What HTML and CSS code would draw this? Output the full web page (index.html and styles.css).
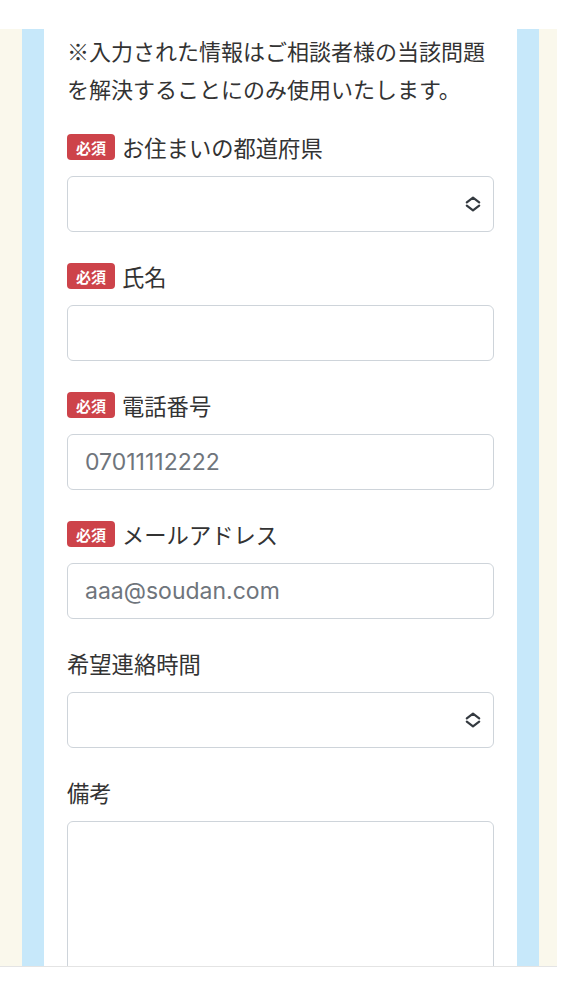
FILE: index.html
```html
<!DOCTYPE html>
<html lang="ja">
<head>
<meta charset="utf-8">
<title>フォーム</title>
<link rel="stylesheet" href="styles.css">
</head>
<body>
<div class="topbar"></div>
<div class="viewport">
  <div class="outer">
    <div class="inner">
      <div class="panel">
        <p class="note">※入力された情報はご相談者様の当該問題を解決することにのみ使用いたします。</p>

        <div class="group">
          <label class="label"><span class="badge">必須</span>お住まいの都道府県</label>
          <div class="select">
            <svg class="chev" viewBox="0 0 16 16" width="16" height="16"><path d="M1.8 6.3 L8 1.6 L14.2 6.3 M1.8 9.7 L8 14.4 L14.2 9.7" fill="none" stroke="#343a40" stroke-width="2.2" stroke-linecap="round" stroke-linejoin="round"/></svg>
          </div>
        </div>

        <div class="group">
          <label class="label"><span class="badge">必須</span>氏名</label>
          <div class="input"></div>
        </div>

        <div class="group">
          <label class="label"><span class="badge">必須</span>電話番号</label>
          <div class="input"><span class="ph">07011112222</span></div>
        </div>

        <div class="group">
          <label class="label"><span class="badge">必須</span>メールアドレス</label>
          <div class="input"><span class="ph">aaa@soudan.com</span></div>
        </div>

        <div class="group">
          <label class="label">希望連絡時間</label>
          <div class="select">
            <svg class="chev" viewBox="0 0 16 16" width="16" height="16"><path d="M1.8 6.3 L8 1.6 L14.2 6.3 M1.8 9.7 L8 14.4 L14.2 9.7" fill="none" stroke="#343a40" stroke-width="2.2" stroke-linecap="round" stroke-linejoin="round"/></svg>
          </div>
        </div>

        <div class="group">
          <label class="label">備考</label>
          <div class="textarea"></div>
        </div>
      </div>
    </div>
  </div>
</div>
</body>
</html>
```
FILE: styles.css
```css
html, body {
  margin: 0;
  padding: 0;
  background: #ffffff;
}
body {
  font-family: "Noto Sans CJK JP", "Noto Sans", sans-serif;
  font-weight: 400;
  color: #333333;
}
.topbar {
  height: 29px;
  background: #ffffff;
}
.viewport {
  width: 557px;
  height: 937px;
  overflow: hidden;
  border-bottom: 1px solid #e4e4e4;
}
.outer {
  background: #faf8ec;
  padding: 0 18px 0 22px;
  height: 100%;
}
.inner {
  background: #c7e8fa;
  padding: 0 22px;
  height: 100%;
}
.panel {
  background: #ffffff;
  padding: 2px 23px 0 23px;
  height: 100%;
}
.note {
  margin: 0 0 23px 0;
  font-size: 22px;
  line-height: 38px;
  letter-spacing: 0;
}
.group {
  margin-bottom: 27px;
}
.label {
  display: flex;
  align-items: center;
  height: 34px;
  margin-bottom: 12px;
  font-size: 22.3px;
  line-height: 34px;
}
.badge {
  display: inline-flex;
  align-items: center;
  justify-content: center;
  width: 48px;
  height: 26px;
  margin-right: 7px;
  border-radius: 4px;
  background: #cd434a;
  color: #ffffff;
  font-family: "Noto Sans CJK JP", sans-serif;
  font-size: 15px;
  font-weight: 700;
  line-height: 1;
}
.input, .select, .textarea {
  box-sizing: border-box;
  width: 427px;
  height: 56px;
  border: 1px solid #ced4da;
  border-radius: 6px;
  background: #ffffff;
  display: flex;
  align-items: center;
  padding: 0 17px;
}
.select {
  justify-content: flex-end;
  padding-right: 12px;
}
.textarea {
  height: 160px;
}
.ph {
  font-family: Inter, "Liberation Sans", sans-serif;
  font-weight: 400;
  font-size: 23px;
  color: #6f757c;
}
.chev {
  display: block;
}
```
